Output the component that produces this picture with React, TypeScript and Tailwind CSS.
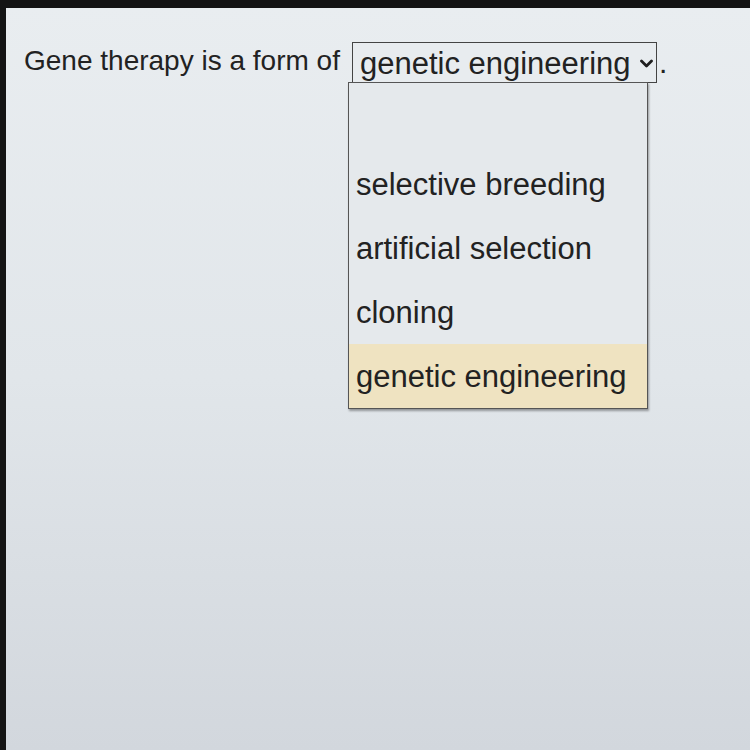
const options = ["", "selective breeding", "artificial selection", "cloning", "genetic engineering"];

function Chevron() {
  return (
    <svg width="13" height="9" viewBox="0 0 13 9" className="shrink-0">
      <polyline points="1.5,2 6.5,7 11.5,2" fill="none" stroke="#1f1f1f" strokeWidth="2.8" strokeLinecap="round" strokeLinejoin="round" />
    </svg>
  );
}

export default function App() {
  const selected = "genetic engineering";

  return (
    <div className="h-[750px] w-full overflow-hidden bg-[#141414] pt-[8px] pl-[6px] font-['Liberation_Sans',Arial,sans-serif] text-[#222]">
      <div className="h-full w-full bg-linear-to-b from-[#e9edf0] via-[#e1e6ea] to-[#d2d7dd] pt-[34px] pl-[18px]">
        <div className="flex items-start">
          <span className="mt-[5px] text-[28px] leading-none">Gene therapy is a form of</span>

          <div className="relative ml-[12px]">
            <div className="flex h-[41px] w-[305px] items-start justify-between border border-[#444] bg-[#e8ecef] pl-[7px] pr-[3px] pt-[5px]">
              <span className="text-[31px] leading-none">{selected}</span>
              <span className="mt-[11px]">
                <Chevron />
              </span>
            </div>

            <ul className="absolute left-[-4px] top-[40px] w-[300px] border border-[#555] bg-[#e5e9ec] shadow-[1px_2px_2px_rgba(0,0,0,0.35)]">
              {options.map((o, i) => (
                <li
                  key={i}
                  className={
                    (i === 0 ? "h-[69px] " : "h-[64px] ") +
                    "flex items-center pl-[7px] text-[31px] leading-none " +
                    (o === selected ? "bg-[#efe3c1]" : "")
                  }
                >
                  {o}
                </li>
              ))}
            </ul>
          </div>

          <span className="ml-[2px] mt-[6px] text-[30px] leading-none">.</span>
        </div>
      </div>
    </div>
  );
}
